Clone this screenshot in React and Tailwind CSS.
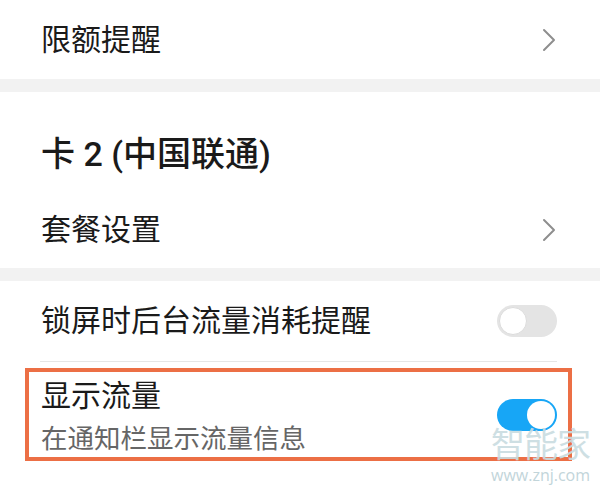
import React from "react";

const font = { fontFamily: '"Roboto", "Noto Sans CJK SC", sans-serif' };

function Chevron() {
  return (
    <svg width="14" height="24" viewBox="0 0 14 24" fill="none">
      <path d="M2 2 L12 12 L2 22" stroke="#8e8e8e" strokeWidth="2" strokeLinecap="round" strokeLinejoin="round" />
    </svg>
  );
}

function Toggle({ on }) {
  if (on) {
    return (
      <div className="w-[60px] h-[32px] rounded-full bg-[#17a6f6] flex items-center justify-end pr-[2px]">
        <div className="w-[28px] h-[28px] rounded-full bg-white" />
      </div>
    );
  }
  return (
    <div className="w-[60px] h-[32px] rounded-full bg-[#e4e4e4] flex items-center justify-start pl-[2px]">
      <div className="w-[28px] h-[28px] rounded-full bg-white border border-[#dcdcdc]" />
    </div>
  );
}

export default function App() {
  return (
    <div className="relative w-[600px] h-[492px] bg-white overflow-hidden text-[#1a1a1a]" style={font}>
      {/* Row 1 */}
      <div className="h-[79px] flex items-center justify-between pl-[41px] pr-[44px]">
        <span className="text-[30px] leading-[36px]">限额提醒</span>
        <Chevron />
      </div>
      <div className="h-[13px] bg-[#f2f2f2]" />

      {/* Card 2 section */}
      <div className="h-[108px] flex items-center pl-[41px] pt-[16px]">
        <span className="text-[34px] leading-[40px] font-medium">卡 2 (中国联通)</span>
      </div>
      <div className="h-[68px] flex items-center justify-between pl-[41px] pr-[44px] pb-[8px]">
        <span className="text-[30px] leading-[36px]">套餐设置</span>
        <Chevron />
      </div>
      <div className="h-[13px] bg-[#f2f2f2]" />

      {/* Toggle rows */}
      <div className="h-[80px] flex items-center justify-between pl-[41px] pr-[43px]">
        <span className="text-[30px] leading-[36px]">锁屏时后台流量消耗提醒</span>
        <Toggle on={false} />
      </div>
      <div className="h-px bg-[#e6e6e6] ml-[40px] mr-[43px]" />
      <div className="h-[6px]" />
      <div className="ml-[25px] w-[547px] h-[93px] border-4 border-[#ec6f45] flex items-center justify-between pl-[12px] pr-[11px]">
        <div className="flex flex-col h-full pt-[6px]">
          <span className="text-[30px] leading-[36px]">显示流量</span>
          <span className="text-[26.5px] leading-[30px] mt-[10px] text-[#666666]">在通知栏显示流量信息</span>
        </div>
        <Toggle on={true} />
      </div>

      {/* Watermark */}
      <div className="absolute left-[491px] top-[426px] flex flex-col items-center pointer-events-none">
        <span className="text-[34px] leading-[38px] text-[#c9dce1] opacity-90 tracking-[-1px]">智能家</span>
        <span className="text-[16px] leading-[18px] text-[#c2d5da] mt-[2px]" style={{ fontFamily: '"Open Sans", sans-serif' }}>www.znj.com</span>
      </div>
    </div>
  );
}
